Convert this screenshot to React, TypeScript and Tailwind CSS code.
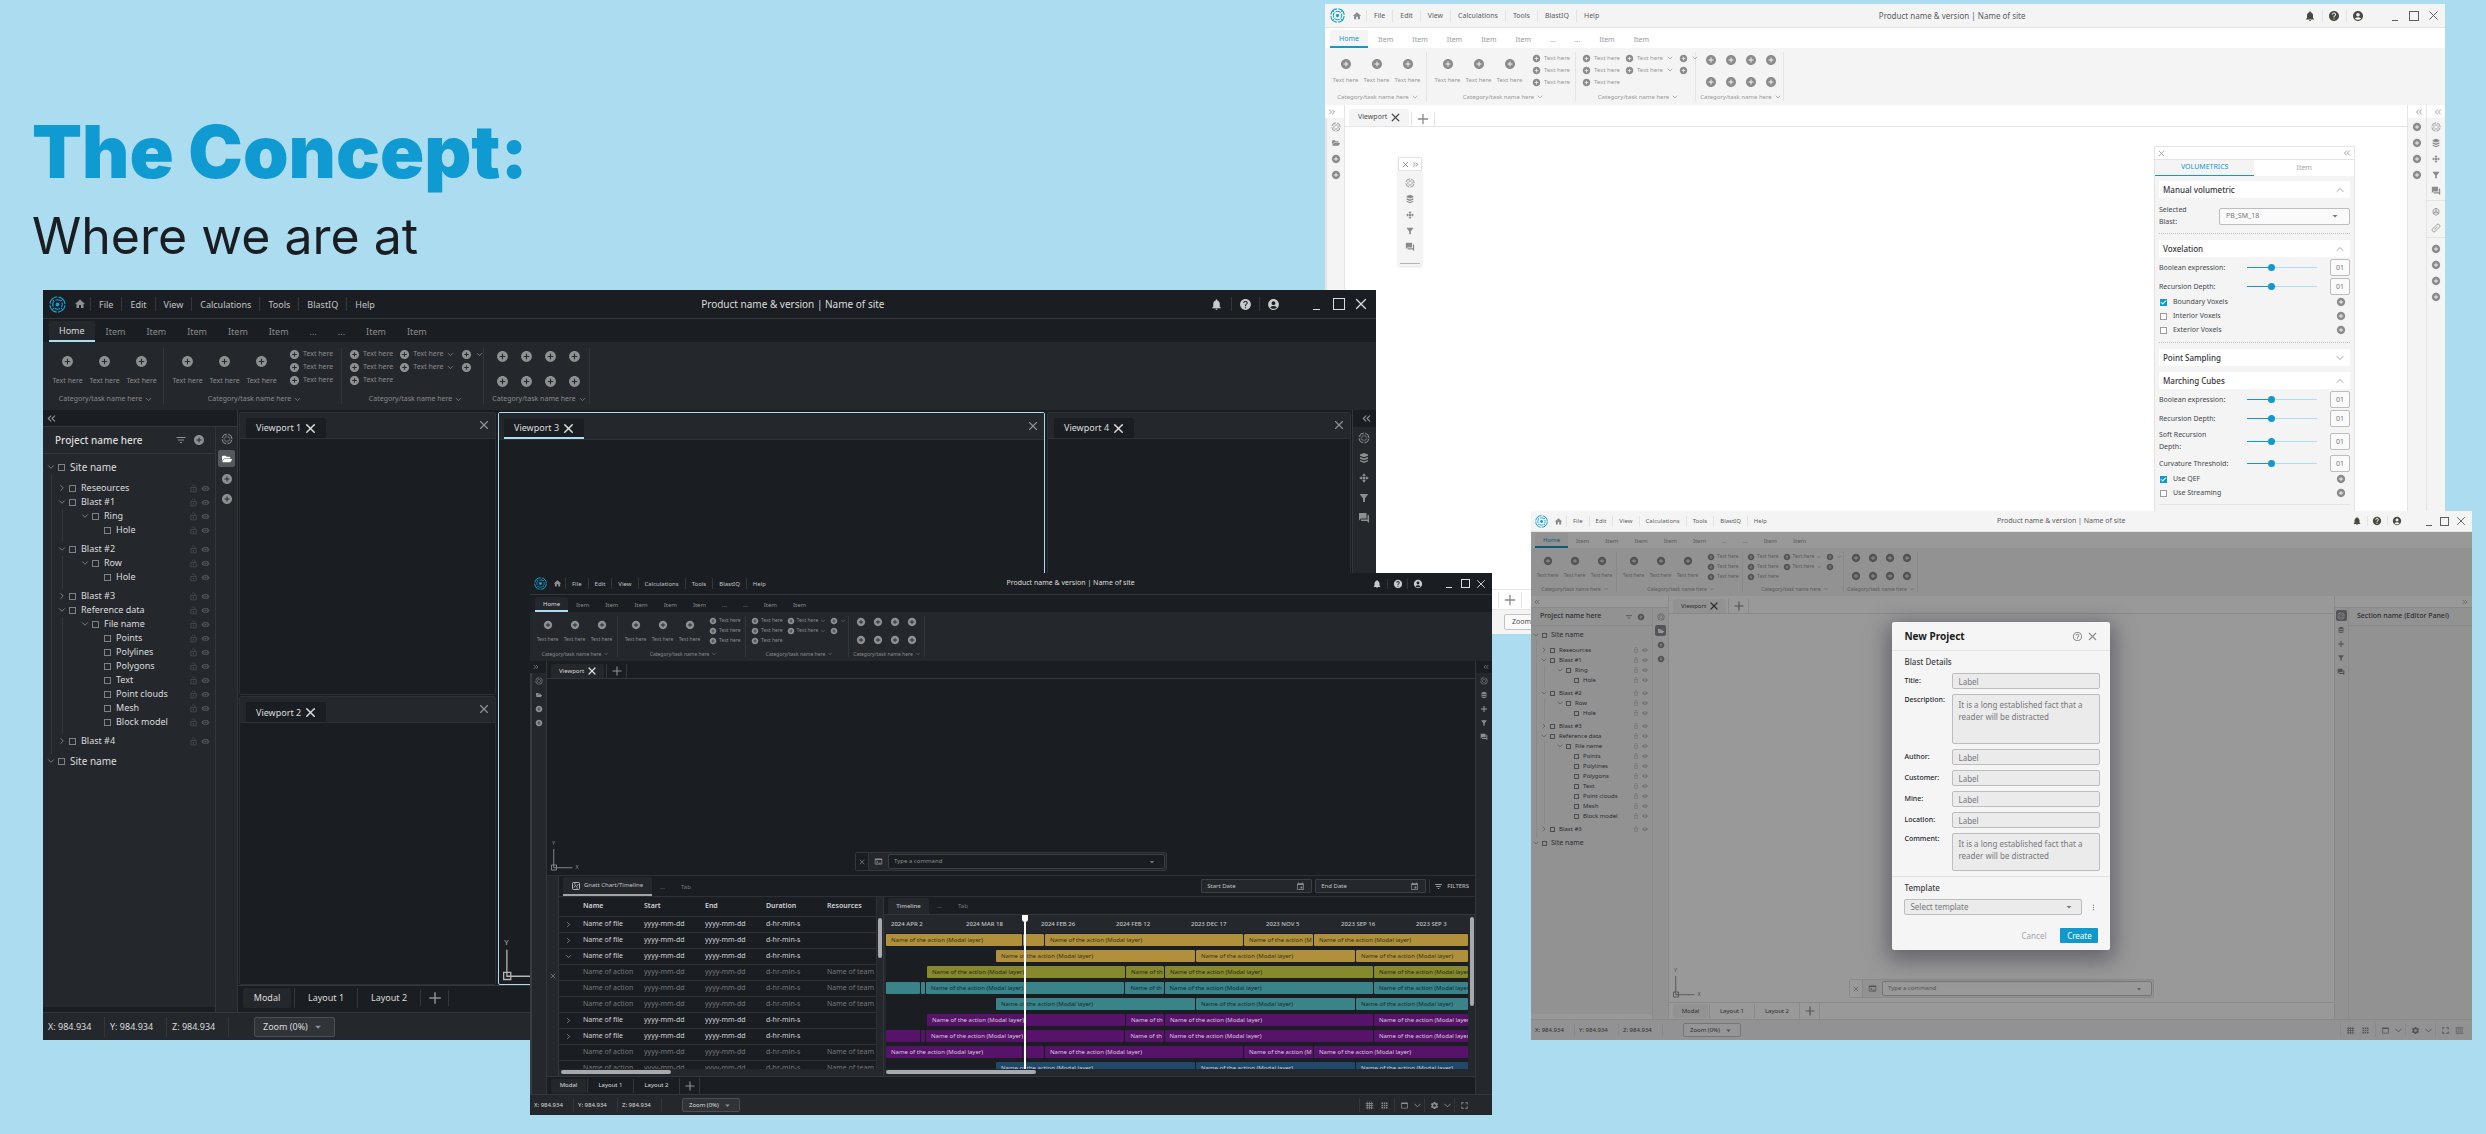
import type { ReactNode } from "react";
import clsx from "clsx";
import { Check, ChevronDown, ChevronRight, ChevronUp, ChevronsLeft, ChevronsRight, Plus, X } from "lucide-react";
import {
  MdAccountCircle,
  MdAddCircle,
  MdApps,
  MdArrowDropDown,
  MdEvent,
  MdFilterAlt,
  MdFilterList,
  MdFullscreen,
  MdGrid4X4,
  MdHelp,
  MdHelpOutline,
  MdHome,
  MdLockOpen,
  MdMoreVert,
  MdNotifications,
  MdQuestionAnswer,
  MdSettings,
  MdTerminal,
  MdVisibility,
  MdWebAsset,
} from "react-icons/md";
import { FaFolderOpen } from "react-icons/fa";

/* ---------- themes ---------- */

const dark = {
  title: "bg-[#1a1d21] text-[#dcdddd]",
  menu: "text-[#c3c4c6]",
  base: "bg-[#1a1d21]",
  panel: "bg-[#24272c]",
  line: "border-[#33363b]",
  text: "text-[#dcdddd]",
  muted: "text-[#8b8c8e]",
  icon: "text-[#8e8f91]",
  faint: "text-[#4d4f52]",
  bright: "text-[#c9cacc]",
  home: "bg-[#24272c] text-[#dcdddd] border-[#abdcf0]",
  tab: "bg-[#24272c]",
  field: "bg-[#303338] border-[#4b4e53]",
  command: "border-[#3c3f44]",
  selected: "bg-[#55585c] text-white",
  strip: "border-l-[#3a3c41]",
};

const light: typeof dark = {
  title: "bg-[#f4f4f4] text-[#5b5d60]",
  menu: "text-[#5b5d60]",
  base: "bg-white",
  panel: "bg-[#f4f4f4]",
  line: "border-[#e4e4e5]",
  text: "text-[#4b4d52]",
  muted: "text-[#97989a]",
  icon: "text-[#8a8b8d]",
  faint: "text-[#b4b5b7]",
  bright: "text-[#4a4a42]",
  home: "bg-[#f4f4f4] text-[#1199cf] border-[#1199cf]",
  tab: "bg-[#f4f4f4]",
  field: "bg-[#fafafa] border-[#c4c4c5]",
  command: "border-[#c4c4c5]",
  selected: "bg-[#8d8e93] text-white",
  strip: "border-l-[#e4e4e5]",
};

/* ---------- densities ---------- */

const lg = {
  title: "h-[29px]",
  titleText: "text-[10px]",
  logo: "size-[17px]",
  logoBox: "pl-[6px] gap-[8px] pr-[4px]",
  home: "size-[12px]",
  menuItem: "h-[14px] px-[8px] text-[9px]",
  cell: "w-[28px] h-[14px]",
  cellIcon: "size-[13px]",
  winGroup: "pl-[19px] pr-[4px]",
  win: "w-[22px] h-[12px]",
  winSquare: "size-[12px]",
  winLine: "w-[7px]",
  winX: "size-[18px]",
  tabs: "h-[23px] pl-[6px] gap-px",
  tab: "h-[21px] px-[10px] text-[9px]",
  ribbon: "h-[68px]",
  group: ["w-[121px] pl-[6px]", "w-[178px] pl-[5px]", "w-[142px] pl-[7px]", "w-[106px] pl-[12px]"],
  groupBox: "my-[6px]",
  big: "w-[37px] pt-[7px] gap-[8px] text-[7px] leading-[10px]",
  bigIcon: "size-[13px]",
  smallGap: "ml-[9px]",
  small: "h-[13px] gap-[3px] text-[7px]",
  smallIcon: "size-[11px]",
  smallCols: "gap-[6px]",
  grid: "pt-[2px] gap-x-[11px] gap-y-[12px]",
  caption: "text-[7px] leading-[10px]",
  chev: "size-[9px]",
  viewTabs: "h-[27px] pl-[7px]",
  viewTab: "h-[20px] pl-[10px] pr-[8px] gap-[2px] text-[9px]",
  viewX: "size-[15px]",
  addTab: "w-[29px]",
  plus: "size-[18px]",
  bottom: "h-[27px] pl-[5px] pb-[3px] text-[9px]",
  bottomActive: "w-[48px] h-[20px] mr-[3px]",
  bottomTab: "w-[63px] h-[20px]",
  status: "h-[28px] text-[9px]",
  coord: "w-[62px] h-[20px] pl-[5px]",
  zoomGap: "ml-[25px]",
  zoom: "w-[81px] h-[20px] pl-[8px] pr-[9px]",
  drop: "size-[14px]",
  foot: "size-[12px]",
  stripTop: "h-[17px] pl-[2px] pr-[3px]",
  stripTool: "size-[17px] mb-[3px]",
  stripIcon: "size-[12px]",
  double: "size-[13px]",
  sideHead: "h-[27px] pl-[12px] pr-[10px] gap-[6px] text-[10px]",
  tree: "pt-[6px]",
  treeRoot: "h-[14px] pl-[4px] gap-[3px] text-[10px]",
  treeRow: ["", "h-[14px] pl-[6px] pr-[5px] gap-[3px] text-[9px]", "h-[14px] pl-[18px] pr-[5px] gap-[3px] text-[9px]", "h-[14px] pl-[41px] pr-[5px] gap-[3px] text-[9px]"],
  treeList: ["ml-[8px] pt-[7px] pb-[6px]", "ml-[10px] pb-[5px]"],
  treeChev: "size-[10px] -mx-px",
  box: "size-[7px] mr-[2px]",
  treeIcon: "size-[9px]",
};

const md: typeof lg = {
  title: "h-[24px]",
  titleText: "text-[8px]",
  logo: "size-[15px]",
  logoBox: "pl-[5px] gap-[7px] pr-[4px]",
  home: "size-[10px]",
  menuItem: "h-[12px] px-[7px] text-[7px]",
  cell: "w-[24px] h-[12px]",
  cellIcon: "size-[12px]",
  winGroup: "pl-[16px] pr-[2px]",
  win: "w-[19px] h-[10px]",
  winSquare: "size-[10px]",
  winLine: "w-[6px]",
  winX: "size-[15px]",
  tabs: "h-[20px] pl-[5px] gap-px",
  tab: "h-[18px] px-[9px] text-[7px]",
  ribbon: "h-[57px]",
  group: ["w-[102px] pl-[5px]", "w-[149px] pl-[5px]", "w-[120px] pl-[6px]", "w-[88px] pl-[9px]"],
  groupBox: "my-[4px]",
  big: "w-[31px] pt-[6px] gap-[6px] text-[6px] leading-[8px]",
  bigIcon: "size-[12px]",
  smallGap: "ml-[7px]",
  small: "h-[12px] gap-[3px] text-[6px]",
  smallIcon: "size-[9px]",
  smallCols: "gap-[5px]",
  grid: "pt-[2px] gap-x-[8px] gap-y-[10px]",
  caption: "text-[6px] leading-[8px]",
  chev: "size-[8px]",
  viewTabs: "h-[22px] pl-[4px]",
  viewTab: "h-[17px] pl-[9px] pr-[7px] gap-[2px] text-[7px]",
  viewX: "size-[13px]",
  addTab: "w-[24px]",
  plus: "size-[16px]",
  bottom: "h-[20px] pl-[4px] text-[7px]",
  bottomActive: "w-[40px] h-[16px] mr-[3px]",
  bottomTab: "w-[53px] h-[16px]",
  status: "h-[25px] text-[7px]",
  coord: "w-[52px] h-[16px] pl-[4px]",
  zoomGap: "ml-[23px]",
  zoom: "w-[68px] h-[16px] pl-[7px] pr-[6px]",
  drop: "size-[12px]",
  foot: "size-[10px]",
  stripTop: "h-[13px] pl-[2px] pr-[2px]",
  stripTool: "size-[13px] mb-[3px]",
  stripIcon: "size-[10px]",
  double: "size-[10px]",
  sideHead: "h-[20px] pl-[9px] pr-[9px] gap-[5px] text-[8px]",
  tree: "pt-[4px]",
  treeRoot: "h-[12px] pl-[3px] gap-[3px] text-[8px]",
  treeRow: ["", "h-[12px] pl-[5px] gap-[3px] text-[7px]", "h-[12px] pl-[15px] gap-[3px] text-[7px]", "h-[12px] pl-[35px] gap-[3px] text-[7px]"],
  treeList: ["ml-[6px] pt-[6px] pb-[5px]", "ml-[8px] pb-[4px]"],
  treeChev: "size-[7px]",
  box: "size-[6px] mr-[1px]",
  treeIcon: "size-[8px]",
};

const sm: typeof lg = {
  title: "h-[22px]",
  titleText: "text-[7px]",
  logo: "size-[13px]",
  logoBox: "pl-[4px] gap-[6px] pr-[3px]",
  home: "size-[9px]",
  menuItem: "h-[11px] px-[6px] text-[6px]",
  cell: "w-[20px] h-[10px]",
  cellIcon: "size-[10px]",
  winGroup: "pl-[14px] pr-[3px]",
  win: "w-[16px] h-[9px]",
  winSquare: "size-[9px]",
  winLine: "w-[6px]",
  winX: "size-[14px]",
  tabs: "h-[17px] pl-[5px]",
  tab: "h-[15px] px-[8px] text-[6px]",
  ribbon: "h-[49px]",
  group: ["w-[88px] pl-[4px]", "w-[128px] pl-[4px]", "w-[103px] pl-[5px]", "w-[76px] pl-[7px]"],
  groupBox: "my-[4px]",
  big: "w-[27px] pt-[4px] gap-[6px] text-[5px] leading-[6px]",
  bigIcon: "size-[10px]",
  smallGap: "ml-[6px]",
  small: "h-[10px] gap-[2px] text-[5px]",
  smallIcon: "size-[8px]",
  smallCols: "gap-[4px]",
  grid: "pt-[1px] gap-x-[7px] gap-y-[8px]",
  caption: "text-[5px] leading-[6px]",
  chev: "size-[6px]",
  viewTabs: "h-[18px] pl-[4px]",
  viewTab: "h-[14px] pl-[8px] pr-[6px] gap-[2px] text-[6px]",
  viewX: "size-[12px]",
  addTab: "w-[21px]",
  plus: "size-[14px]",
  bottom: "h-[18px] pl-[4px] text-[6px]",
  bottomActive: "w-[35px] h-[14px] mr-[1px]",
  bottomTab: "w-[46px] h-[14px]",
  status: "h-[21px] text-[6px]",
  coord: "w-[44px] h-[14px] pl-[4px]",
  zoomGap: "ml-[20px]",
  zoom: "w-[58px] h-[14px] pl-[6px] pr-[6px]",
  drop: "size-[11px]",
  foot: "size-[9px]",
  stripTop: "h-[12px] pl-[2px] pr-[2px]",
  stripTool: "size-[11px] mb-[3px]",
  stripIcon: "size-[8px]",
  double: "size-[8px]",
  sideHead: "h-[18px] pl-[9px] pr-[7px] gap-[4px] text-[7px]",
  tree: "pt-[4px]",
  treeRoot: "h-[10px] pl-[2px] gap-[3px] text-[7px]",
  treeRow: ["", "h-[10px] pl-[4px] pr-[4px] gap-[3px] text-[6px]", "h-[10px] pl-[12px] pr-[4px] gap-[3px] text-[6px]", "h-[10px] pl-[29px] pr-[4px] gap-[3px] text-[6px]"],
  treeList: ["ml-[5px] pt-[5px] pb-[4px]", "ml-[7px] pb-[3px]"],
  treeChev: "size-[8px] -mx-px",
  box: "size-[5px] mr-[1px]",
  treeIcon: "size-[6px]",
};

const xs: typeof lg = {
  ...sm,
  title: "h-[21px]",
  tabs: "h-[16px] pl-[4px]",
  ribbon: "h-[48px]",
  group: ["w-[86px] pl-[3px]", "w-[126px] pl-[3px]", "w-[101px] pl-[4px]", "w-[74px] pl-[7px]"],
  bottom: "h-[17px] pl-[4px] text-[6px]",
  bottomTab: "w-[45px] h-[14px]",
};

type Look = { t: typeof dark; s: typeof lg };

/* ---------- drawn icons ---------- */

function Logo({ className }: { className: string }) {
  return (
    <svg viewBox="0 0 32 32" className={className} fill="none" stroke="#12a0d6">
      <circle cx="16" cy="16" r="14.2" strokeWidth="2.4" strokeDasharray="19.3 3" strokeDashoffset="-1.5" />
      <circle cx="16" cy="16" r="9" strokeWidth="2.2" strokeDasharray="10.6 3.54" strokeDashoffset="5.3" />
      <path d="M6 6l4 4M26 6l-4 4M6 26l4-4M26 26l-4-4" strokeWidth="1.8" />
      <circle cx="16" cy="16" r="3.6" fill="#12a0d6" stroke="none" />
    </svg>
  );
}

function TargetIcon({ className }: { className: string }) {
  return (
    <svg viewBox="0 0 24 24" className={className} fill="none" stroke="currentColor" strokeWidth="2">
      <circle cx="12" cy="12" r="10" strokeDasharray="12.700 3" strokeDashoffset="-1.5" />
      <path d="M10 5v3.500L8.500 10H5M14 5v3.500l1.500 1.500H19M10 19v-3.500L8.500 14H5M14 19v-3.500l1.500-1.500H19" strokeWidth="1.600" />
    </svg>
  );
}

function FolderIcon({ className }: { className: string }) {
  return <FaFolderOpen className={clsx("p-px", className)} />;
}

function StackIcon({ className }: { className: string }) {
  return (
    <svg viewBox="0 0 24 24" className={className} fill="currentColor">
      <path d="M12 2l8 3v2.500l-8 3-8-3V5zM4 10l8 3 8-3v3.500l-8 3-8-3zM4 16l8 3 8-3v2.500l-8 3.500-8-3.500z" />
    </svg>
  );
}

function DiamondIcon({ className }: { className: string }) {
  return (
    <svg viewBox="0 0 24 24" className={className} fill="currentColor">
      <path d="M12 2.500l3.500 4.500L12 8.500 8.500 7zM12 21.500L8.500 17l3.500-1.500 3.500 1.500zM2.500 12L7 8.500 8.500 12 7 15.500zM21.500 12L17 15.500 15.500 12 17 8.500z" />
      <circle cx="12" cy="12" r="3.200" />
    </svg>
  );
}

function CubeIcon({ className }: { className: string }) {
  return (
    <svg viewBox="0 0 24 24" className={className} fill="none" stroke="currentColor" strokeWidth="2">
      <path d="M12 3l7 4.500v8L12 20l-7-4.500v-8zM12 8l4 6H8zM12 3v5M5 15.500L8 14M19 15.500L16 14" />
    </svg>
  );
}

function RulerIcon({ className }: { className: string }) {
  return (
    <svg viewBox="0 0 24 24" className={className} fill="none" stroke="currentColor" strokeWidth="2">
      <path d="M3 15L15 3q3-1 5 1t1 5L9 21q-3 1-5-1t-1-5zM8 16l7-7" />
    </svg>
  );
}

function LinesIcon({ className }: { className: string }) {
  return (
    <svg viewBox="0 0 24 24" className={className} fill="none" stroke="currentColor" strokeWidth="2.500">
      <path d="M2 5h20M2 19h20" />
      <path d="M2 10h20M2 14h20" strokeDasharray="3 2" />
    </svg>
  );
}

function Axis({ className }: { className: string }) {
  return (
    <svg viewBox="0 0 34 36" className={className} fill="none" stroke="currentColor">
      <text x="1" y="8" fontSize="6" fill="currentColor" stroke="none">Y</text>
      <text x="27" y="34" fontSize="6" fill="currentColor" stroke="none">X</text>
      <path d="M3 12v20.500h20.500M.5 29.500h5.500v5.500h-5.500z" />
    </svg>
  );
}

/* ---------- window chrome ---------- */

const menus = ["File", "Edit", "View", "Calculations", "Tools", "BlastIQ", "Help"];
const ribbonTabs = ["Home", "Item", "Item", "Item", "Item", "Item", "...", "...", "Item", "Item"];

function TitleBar({ t, s }: Look) {
  return (
    <header className={clsx("flex items-center border-b", s.title, t.title, t.line)}>
      <div className="flex w-[49%] items-center">
        <div className={clsx("flex items-center", s.logoBox)}>
          <Logo className={s.logo} />
          <MdHome className={clsx(s.home, t.icon)} />
        </div>
        {menus.map((m) => (
          <button key={m} className={clsx("border-l leading-none", s.menuItem, t.line, t.menu)}>
            {m}
          </button>
        ))}
      </div>
      <h2 className={clsx("flex-1 pl-[5px] whitespace-nowrap", s.titleText)}>Product name &amp; version | Name of site</h2>
      <div className={clsx("flex items-center", t.bright)}>
        {[MdNotifications, MdHelp, MdAccountCircle].map((Icon, i) => (
          <button key={i} aria-label={["Notifications", "Help", "Account"][i]} className={clsx("flex items-center justify-center", s.cell, t.line, i > 0 && "border-l")}>
            <Icon className={s.cellIcon} />
          </button>
        ))}
      </div>
      <div className={clsx("flex items-center", s.winGroup)}>
        <button aria-label="Minimise" className={clsx("flex items-end justify-center", s.win)}>
          <span className={clsx("border-b border-current", s.winLine)} />
        </button>
        <button aria-label="Maximise" className={clsx("flex items-center justify-center", s.win)}>
          <span className={clsx("border border-current", s.winSquare)} />
        </button>
        <button aria-label="Close" className={clsx("flex items-center justify-center", s.win)}>
          <X className={clsx("shrink-0", s.winX)} strokeWidth={1.6} />
        </button>
      </div>
    </header>
  );
}

function BigButtons({ t, s }: Look) {
  return (
    <>
      {[0, 1, 2].map((i) => (
        <button key={i} className={clsx("flex flex-col items-center whitespace-nowrap", s.big, t.muted)}>
          <MdAddCircle className={clsx("shrink-0", s.bigIcon, t.icon)} />
          Text here
        </button>
      ))}
    </>
  );
}

function SmallButton({ t, s, text, chevron }: Look & { text?: boolean; chevron?: boolean }) {
  return (
    <button aria-label="Text here" className={clsx("flex items-center whitespace-nowrap", s.small, t.muted)}>
      <MdAddCircle className={clsx("shrink-0", s.smallIcon, t.icon)} />
      {text && "Text here"}
      {chevron && <ChevronDown className={clsx("shrink-0", s.chev)} />}
    </button>
  );
}

function RibbonGroup({ t, s, index, children }: Look & { index: number; children: ReactNode }) {
  return (
    <section className={clsx("flex flex-col justify-between border-r", s.groupBox, s.group[index], t.line)}>
      <div className="flex items-start">{children}</div>
      <button className={clsx("flex items-center gap-[2px] self-center whitespace-nowrap", index === 3 ? "-ml-[6px]" : "", s.caption, t.muted)}>
        Category/task name here
        <ChevronDown className={s.chev} />
      </button>
    </section>
  );
}

function Ribbon({ t, s }: Look) {
  return (
    <>
      <nav className={clsx("flex items-end", s.tabs, t.base)}>
        {ribbonTabs.map((name, i) => (
          <button key={i} className={clsx("leading-none", s.tab, i === 0 ? ["rounded-t-[2px] border-b-2", t.home] : t.muted)}>
            {name}
          </button>
        ))}
      </nav>
      <div className={clsx("flex", s.ribbon, t.panel)}>
        <RibbonGroup t={t} s={s} index={0}>
          <BigButtons t={t} s={s} />
        </RibbonGroup>
        <RibbonGroup t={t} s={s} index={1}>
          <BigButtons t={t} s={s} />
          <div className={s.smallGap}>
            {[0, 1, 2].map((i) => (
              <SmallButton key={i} t={t} s={s} text />
            ))}
          </div>
        </RibbonGroup>
        <RibbonGroup t={t} s={s} index={2}>
          <div className={clsx("flex items-start", s.smallCols)}>
            <div>
              {[0, 1, 2].map((i) => (
                <SmallButton key={i} t={t} s={s} text />
              ))}
            </div>
            <div>
              <SmallButton t={t} s={s} text chevron />
              <SmallButton t={t} s={s} text chevron />
            </div>
            <div>
              <SmallButton t={t} s={s} chevron />
              <SmallButton t={t} s={s} />
            </div>
          </div>
        </RibbonGroup>
        <RibbonGroup t={t} s={s} index={3}>
          <div className={clsx("grid grid-cols-4", s.grid)}>
            {[0, 1, 2, 3, 4, 5, 6, 7].map((i) => (
              <button key={i} aria-label="Add">
                <MdAddCircle className={clsx(s.bigIcon, t.icon)} />
              </button>
            ))}
          </div>
        </RibbonGroup>
      </div>
    </>
  );
}

function ToolIcons({ t, s, icons, active = -1 }: Look & { icons: any[]; active?: number }) {
  return (
    <>
      {icons.map((Icon, i) =>
        Icon === null ? (
          <hr key={i} className={clsx("mb-[4px] w-full border-t", t.line)} />
        ) : (
          <button key={i} aria-label="Tool" className={clsx("flex items-center justify-center rounded-[2px]", s.stripTool, i === active ? t.selected : t.icon)}>
            <Icon className={s.stripIcon} />
          </button>
        ),
      )}
    </>
  );
}

const leftTools = [TargetIcon, FolderIcon, MdAddCircle, MdAddCircle];
const rightTools = [TargetIcon, StackIcon, DiamondIcon, MdFilterAlt, MdQuestionAnswer];

/* Narrow docked tool column with a collapse bar on top */
function ToolStrip({ t, s, icons, side, className }: Look & { icons: any[]; side: "left" | "right"; className: string }) {
  return (
    <aside className={clsx("flex flex-col", side === "left" ? "border-r" : "border-l", className, t.line, t.panel)}>
      <button aria-label="Expand" className={clsx("flex items-center", side === "right" && "justify-end", s.stripTop, t.base, t.icon)}>
        {side === "left" ? <ChevronsRight className={s.double} /> : <ChevronsLeft className={s.double} />}
      </button>
      <div className={clsx("flex flex-1 flex-col items-center pt-[2px]", side === "left" && "border-l-2", t.strip)}>
        <ToolIcons t={t} s={s} icons={icons} />
      </div>
    </aside>
  );
}

function ViewTabs({ t, s }: Look) {
  return (
    <div className={clsx("flex items-end border-b", s.viewTabs, t.base, t.line)}>
      <button className={clsx("mr-[2px] flex items-center rounded-t-[2px]", s.viewTab, t.tab, t.text)}>
        Viewport
        <X className={s.viewX} strokeWidth={2.4} />
      </button>
      <button aria-label="Add viewport" className={clsx("flex h-[14px] items-center justify-center border-x", s.addTab, t.line, t.icon)}>
        <Plus className={s.plus} />
      </button>
    </div>
  );
}

function LayoutTabs({ t, s }: Look) {
  return (
    <div className={clsx("flex items-center border-t", s.bottom, t.base, t.line, t.text)}>
      <button className={clsx("rounded-[2px]", s.bottomActive, t.tab)}>Modal</button>
      <button className={clsx("border-l", s.bottomTab, t.line)}>Layout 1</button>
      <button className={clsx("border-l", s.bottomTab, t.line)}>Layout 2</button>
      <button aria-label="Add layout" className={clsx("flex h-[16px] items-center justify-center border-x", s.addTab, t.line, t.icon)}>
        <Plus className={s.plus} />
      </button>
    </div>
  );
}

function StatusBar({ t, s, extra, className }: Look & { extra?: boolean; className?: string }) {
  return (
    <footer className={clsx("flex items-center justify-between border-t", s.status, t.panel, t.line, t.text, className)}>
      <div className="flex items-center">
        {["X: 984.934", "Y: 984.934", "Z: 984.934"].map((c) => (
          <span key={c} className={clsx("flex items-center border-r whitespace-nowrap", s.coord, t.line)}>
            {c}
          </span>
        ))}
        <label className={clsx("flex items-center rounded-[2px] border", s.zoomGap, s.zoom, t.field)}>
          <select aria-label="Zoom" className="min-w-0 flex-1 appearance-none">
            <option>Zoom (0%)</option>
          </select>
          <MdArrowDropDown className={clsx("shrink-0", s.drop, t.icon)} />
        </label>
      </div>
      <div className={clsx("flex items-center", t.icon)}>
        <div className={clsx("flex h-[14px] items-center gap-[6px] border-l px-[5px]", t.line)}>
          <MdGrid4X4 className={s.foot} />
          <MdApps className={s.foot} />
        </div>
        <div className={clsx("flex h-[14px] items-center gap-[3px] border-l pr-px pl-[5px]", t.line)}>
          <MdWebAsset className={s.foot} />
          <ChevronDown className={s.drop} />
        </div>
        <div className={clsx("flex h-[14px] items-center gap-[3px] border-l pr-px pl-[5px]", t.line)}>
          <MdSettings className={s.foot} />
          <ChevronDown className={s.drop} />
        </div>
        <div className={clsx("flex h-[14px] items-center gap-[4px] border-l pl-[4px]", extra ? "pr-[8px]" : "pr-[5px]", t.line)}>
          <MdFullscreen className={s.drop} />
          {extra && <LinesIcon className={s.foot} />}
        </div>
      </div>
    </footer>
  );
}

/* ---------- project tree ---------- */

type Node = { name: string; open?: boolean; children?: Node[] };

const makeTree = (last: string): Node[] => [
  {
    name: "Site name",
    children: [
      { name: "Reseources", open: false },
      { name: "Blast #1", children: [{ name: "Ring", children: [{ name: "Hole" }] }] },
      { name: "Blast #2", children: [{ name: "Row", children: [{ name: "Hole" }] }] },
      { name: "Blast #3", open: false },
      {
        name: "Reference data",
        children: [
          {
            name: "File name",
            children: ["Points", "Polylines", "Polygons", "Text", "Point clouds", "Mesh", "Block model"].map((name) => ({ name })),
          },
        ],
      },
      { name: last, open: false },
    ],
  },
  { name: "Site name", open: true },
];

function TreeNode({ t, s, node, depth }: Look & { node: Node; depth: number }) {
  return (
    <li>
      <div className={clsx("flex items-center whitespace-nowrap", depth === 0 ? s.treeRoot : s.treeRow[depth])}>
        {depth < 3 &&
          (node.open === false ? (
            <ChevronRight className={clsx(s.treeChev, t.icon)} />
          ) : (
            <ChevronDown className={clsx(s.treeChev, t.icon)} />
          ))}
        <label className="flex flex-1 items-center gap-[3px]">
          <input type="checkbox" className={clsx("appearance-none border border-[#808184]", s.box)} />
          {node.name}
        </label>
        {depth > 0 && (
          <>
            <MdLockOpen className={clsx(s.treeIcon, t.faint)} />
            <MdVisibility className={clsx(s.treeIcon, t.faint)} />
          </>
        )}
      </div>
      {node.children && (
        <ul className={depth < 2 ? clsx("border-l", s.treeList[depth], t.line) : ""}>
          {node.children.map((child, i) => (
            <TreeNode key={i} t={t} s={s} node={child} depth={depth + 1} />
          ))}
        </ul>
      )}
    </li>
  );
}

function ProjectPanel({ t, s, last, tree, tools, active }: Look & { last: string; tree: string; tools: string; active: number }) {
  return (
    <aside className="flex flex-col">
      <button aria-label="Collapse" className={clsx("flex items-center border-r border-b", s.stripTop, t.base, t.line, t.icon)}>
        <ChevronsLeft className={s.double} />
      </button>
      <div className="flex flex-1">
        <div className={clsx("flex flex-col border-r", tree, t.line, t.base)}>
          <div className={clsx("flex flex-1 flex-col", t.panel, t.text)}>
            <div className={clsx("flex items-center border-b font-medium whitespace-nowrap", s.sideHead, t.line)}>
              <span className="flex-1">Project name here</span>
              <MdFilterList className={clsx(s.stripIcon, t.icon)} />
              <MdAddCircle className={clsx(s.stripIcon, t.icon)} />
            </div>
            <ul className={s.tree}>
              {makeTree(last).map((node, i) => (
                <TreeNode key={i} t={t} s={s} node={node} depth={0} />
              ))}
            </ul>
          </div>
          <div className="h-[5px]" />
        </div>
        <div className={clsx("flex flex-col items-center border-r pt-[3px]", tools, t.panel, t.line)}>
          <ToolIcons t={t} s={s} icons={leftTools} active={active} />
        </div>
      </div>
    </aside>
  );
}

/* ---------- window: four viewports ---------- */

function Viewport({ name, active, children }: { name: string; active?: boolean; children?: ReactNode }) {
  return (
    <section className={clsx("flex min-w-0 flex-1 flex-col rounded-[2px] border bg-[#1a1d21]", active ? "border-[#abdcf0]" : "border-[#2d3035]")}>
      <div className={clsx("flex items-end border-b border-[#2d3035] bg-[#24272c] pr-[4px]", active ? "h-[27px] pl-[5px]" : "h-[26px] pl-[6px]")}>
        <button
          className={clsx(
            "flex h-[20px] items-center gap-[2px] rounded-t-[2px] bg-[#1a1d21] pr-[8px] pl-[10px] text-[9px] whitespace-nowrap text-[#dcdddd]",
            active && "border-b-2 border-[#abdcf0]",
          )}
        >
          {name}
          <X className="size-[15px]" strokeWidth={2.4} />
        </button>
        <button aria-label="Close viewport" className="mb-[6px] ml-auto text-[#8e8f91]">
          <X className="size-[14px]" />
        </button>
      </div>
      <div className="flex flex-1 items-end">{children}</div>
    </section>
  );
}

function MultiViewWindow() {
  const look = { t: dark, s: lg };
  return (
    <article className="absolute top-[290px] left-[1.73%] flex h-[750px] w-[53.62%] flex-col bg-[#1a1d21]">
      <TitleBar {...look} />
      <Ribbon {...look} />
      <div className="flex flex-1">
        <ProjectPanel {...look} last="Blast #4" tree="w-[173px]" tools="w-[22px]" active={1} />
        <div className="flex flex-1 flex-col">
          <div className="grid flex-1 grid-cols-[257fr_547fr_304fr] gap-[2px] px-px pt-[2px]">
            <div className="grid grid-rows-[283fr_288fr] gap-px">
              <Viewport name="Viewport 1" />
              <Viewport name="Viewport 2" />
            </div>
            <Viewport name="Viewport 3" active>
              <Axis className="mb-[3px] ml-[4px] h-[47px] w-[44px] text-[#b5b6b8]" />
            </Viewport>
            <Viewport name="Viewport 4" />
          </div>
          <LayoutTabs {...look} />
        </div>
        <ToolStrip {...look} side="right" icons={rightTools} className="w-[24px]" />
      </div>
      <StatusBar {...look} />
    </article>
  );
}

/* ---------- window: volumetrics ---------- */

function Accordion({ title, open = true, className }: { title: string; open?: boolean; className?: string }) {
  const Chevron = open ? ChevronUp : ChevronDown;
  return (
    <button className={clsx("flex h-[17px] w-full items-center justify-between bg-white px-[4px] text-[8px] font-medium text-[#33363b]", className)}>
      {title}
      <Chevron className="size-[12px] text-[#8a8b8d]" strokeWidth={1.6} />
    </button>
  );
}

function SliderRow({ label, id }: { label: ReactNode; id: string }) {
  return (
    <div className="mt-[2px] flex items-center">
      <label htmlFor={id} className="flex-1 leading-[12px]">
        {label}
      </label>
      <input
        id={id}
        type="range"
        defaultValue={34}
        className="mr-[13px] h-[7px] w-[70px] appearance-none bg-[linear-gradient(to_right,#1199cf_36%,#a9def3_36%)] bg-[length:100%_1px] bg-center bg-no-repeat [&::-webkit-slider-thumb]:size-[7px] [&::-webkit-slider-thumb]:appearance-none [&::-webkit-slider-thumb]:rounded-full [&::-webkit-slider-thumb]:bg-[#1199cf]"
      />
      <input aria-label="Value" defaultValue="01" className="h-[17px] w-[20px] rounded-[2px] border border-[#bdbdbe] bg-[#fafafa] text-center text-[#77787a]" />
    </div>
  );
}

function CheckRow({ label, checked }: { label: string; checked?: boolean }) {
  return (
    <div className="flex h-[14px] items-center justify-between pr-[4px] pl-px">
      <label className="flex items-center gap-[6px]">
        <span className="grid size-[7px]">
          <input type="checkbox" defaultChecked={checked} className="peer col-start-1 row-start-1 appearance-none border border-[#9a9b9d] bg-white checked:border-[#1199cf] checked:bg-[#1199cf]" />
          <Check className="invisible col-start-1 row-start-1 size-[7px] text-white peer-checked:visible" strokeWidth={3.5} />
        </span>
        {label}
      </label>
      <MdAddCircle className="size-[10px] text-[#8a8b8d]" />
    </div>
  );
}

function VolumetricsPanel() {
  return (
    <section className="absolute top-[19px] right-[52px] w-[201px] border border-[#e4e4e5] bg-[#f4f4f4] text-[7px] text-[#45484c]">
      <div className="flex h-[13px] items-center justify-between border-b border-[#e4e4e5] bg-white px-[2px] text-[#8a8b8d]">
        <X className="size-[9px]" />
        <ChevronsLeft className="size-[10px]" />
      </div>
      <div className="flex h-[16px]">
        <button className="flex-1 border-b border-[#1199cf] text-[#1199cf]">VOLUMETRICS</button>
        <button className="flex-1 bg-white text-[#a3a4a6]">Item</button>
      </div>
      <div className="px-[4px] pt-[5px]">
        <Accordion title="Manual volumetric" />
        <div className="mt-[6px] flex items-center justify-between">
          <label htmlFor="blast" className="w-[36px] leading-[12px]">
            Selected Blast:
          </label>
          <div className="flex h-[17px] w-[131px] items-center rounded-[2px] border border-[#bdbdbe] bg-[#fafafa] pr-[8px] pl-[6px] text-[#77787a]">
            <select id="blast" className="flex-1 appearance-none">
              <option>PB_SM_18</option>
            </select>
            <MdArrowDropDown className="size-[12px]" />
          </div>
        </div>
        <hr className="mt-[5px] border-t border-dotted border-[#bdbdbe]" />
        <Accordion title="Voxelation" className="mt-[6px]" />
        <SliderRow id="vox-expression" label="Boolean expression:" />
        <SliderRow id="vox-depth" label="Recursion Depth:" />
        <CheckRow label="Boundary Voxels" checked />
        <CheckRow label="Interior Voxels" />
        <CheckRow label="Exterior Voxels" />
        <hr className="mt-[5px] border-t border-dotted border-[#bdbdbe]" />
        <Accordion title="Point Sampling" open={false} className="mt-[6px]" />
        <Accordion title="Marching Cubes" className="mt-[6px]" />
        <SliderRow id="cube-expression" label="Boolean expression:" />
        <SliderRow id="cube-depth" label="Recursion Depth:" />
        <SliderRow
          id="cube-soft"
          label={
            <>
              Soft Recursion
              <br />
              Depth:
            </>
          }
        />
        <SliderRow id="cube-curve" label="Curvature Threshold:" />
        <CheckRow label="Use QEF" checked />
        <CheckRow label="Use Streaming" />
        <hr className="mt-[4px] mb-[20px] border-t border-[#e4e4e5]" />
      </div>
    </section>
  );
}

function VolumetricsWindow() {
  const look = { t: light, s: md };
  return (
    <article className="absolute top-[4px] left-[53.3%] flex h-[630px] w-[45.05%] flex-col bg-white">
      <TitleBar {...look} />
      <Ribbon {...look} />
      <div className="flex flex-1">
        <ToolStrip {...look} side="left" icons={leftTools} className="w-[20px]" />
        <div className="flex flex-1 flex-col">
          <ViewTabs {...look} />
          <div className="relative flex-1">
            <div className="absolute top-[30px] left-[53px] w-[24px] rounded-[2px] bg-[#f4f4f4] shadow">
              <div className="flex h-[14px] items-center justify-center gap-px border border-[#e4e4e5] bg-white text-[#77787a]">
                <X className="size-[9px]" />
                <ChevronsRight className="size-[9px]" />
              </div>
              <div className="flex flex-col items-center pt-[5px]">
                <ToolIcons {...look} icons={rightTools} />
                <span className="mt-[7px] mb-[2px] w-[20px] border-b border-[#b4b5b7]" />
              </div>
            </div>
            <VolumetricsPanel />
          </div>
          <LayoutTabs {...look} />
        </div>
        <ToolStrip {...look} side="right" icons={[MdAddCircle, MdAddCircle, MdAddCircle, MdAddCircle]} className="w-[19px]" />
        <ToolStrip
          {...look}
          side="right"
          icons={[...rightTools, null, CubeIcon, RulerIcon, null, MdAddCircle, MdAddCircle, MdAddCircle, MdAddCircle]}
          className="w-[19px]"
        />
      </div>
      <StatusBar {...look} />
    </article>
  );
}

/* ---------- command line ---------- */

function CommandArea({ t, columns }: { t: typeof dark; columns: string }) {
  return (
    <div className={clsx("grid flex-1 items-end", columns, t.base)}>
      <Axis className={clsx("mb-[4px] ml-[4px] h-[33px] w-[31px]", t.icon)} />
      <div className={clsx("mb-[4px] flex h-[19px] items-center rounded-[2px] border text-[6px]", t.panel, t.line, t.icon)}>
        <button aria-label="Close command line" className={clsx("flex h-full w-[13px] items-center justify-center border-r", t.base, t.line)}>
          <X className="size-[8px]" />
        </button>
        <MdTerminal className="mx-[5px] size-[9px]" />
        <label className={clsx("mr-px flex h-[15px] flex-1 items-center rounded-[2px] border pr-[7px] pl-[5px]", t.base, t.command)}>
          <input aria-label="Command" placeholder="Type a command" className="min-w-0 flex-1 placeholder:text-[#8b8c8e]" />
          <MdArrowDropDown className="size-[10px]" />
        </label>
      </div>
      <span />
    </div>
  );
}

/* ---------- window: gantt ---------- */

const rowKinds = ["file", "file", "open", "action", "action", "action", "file", "file", "action", "action"];
const dates = ["2024 APR 2", "2024 MAR 18", "2024 FEB 26", "2024 FEB 12", "2023 DEC 17", "2023 NOV 5", "2023 SEP 16", "2023 SEP 3"];

type Bar = [length: number, label: string];
const action = "Name of the action (Modal layer)";

const full = { lead: 0, bars: [[136, action], [21, ""], [198, action], [69, "Name of the action (M"], [154, action]] as Bar[] };
const late = { lead: 109, bars: [[199, action], [159, action], [112, action]] as Bar[] };
const mid = { lead: 40, bars: [[198, action], [38, "Name of th"], [208, action], [94, action]] as Bar[] };
const split = { lead: 0, bars: [[34, ""], [4, ""], ...mid.bars] as Bar[] };

const lanes = [
  { ...full, tone: "bg-[#b0903a] text-[#33321f]" },
  { ...late, tone: "bg-[#b0903a] text-[#33321f]" },
  { ...mid, tone: "bg-[#868a2d] text-[#26291f]" },
  { ...split, tone: "bg-[#3a8389] text-[#122a3a]" },
  { ...late, tone: "bg-[#3a8389] text-[#122a3a]" },
  { ...mid, tone: "bg-[#561369] text-[#d5cbd9]" },
  { ...split, tone: "bg-[#561369] text-[#d5cbd9]" },
  { ...full, tone: "bg-[#561369] text-[#d5cbd9]" },
  { ...late, tone: "bg-[#1f4869] text-[#c5d2dc]" },
];

function TaskTable() {
  return (
    <table className="w-full table-fixed text-left text-[7px] text-[#d2d3d5]">
      <colgroup>
        <col className="w-[24px]" />
        <col className="w-[61px]" />
        <col className="w-[61px]" />
        <col className="w-[61px]" />
        <col className="w-[61px]" />
        <col />
      </colgroup>
      <thead>
        <tr className="h-[19px] border-b border-[#2d3035]">
          <th />
          {["Name", "Start", "End", "Duration", "Resources"].map((h) => (
            <th key={h} className="py-0 font-semibold">
              {h}
            </th>
          ))}
        </tr>
      </thead>
      <tbody>
        {rowKinds.map((kind, i) => {
          const isAction = kind === "action";
          return (
            <tr key={i} className={clsx("h-[16px] border-b border-[#2d3035] leading-[10px] whitespace-nowrap", isAction && "text-[#77787b]")}>
              <td className="pl-[5px]">
                {kind === "file" && <ChevronRight className="size-[9px] text-[#8e8f91]" />}
                {kind === "open" && <ChevronDown className="size-[9px] text-[#8e8f91]" />}
              </td>
              <td>{isAction ? "Name of action" : "Name of file"}</td>
              <td>yyyy-mm-dd</td>
              <td>yyyy-mm-dd</td>
              <td>d-hr-min-s</td>
              <td>{isAction && "Name of team"}</td>
            </tr>
          );
        })}
      </tbody>
    </table>
  );
}

function Timeline() {
  return (
    <div className="relative flex-1 overflow-hidden bg-[#1a1d21]">
      <div className="flex h-[18px] items-center bg-[#24272c] pl-[5px] text-[6px] font-medium whitespace-nowrap text-[#c3c4c6]">
        {dates.map((d, i) => (
          <span key={d} className={i < 7 ? "flex-[75] basis-0" : "flex-[52] basis-0"}>
            {d}
          </span>
        ))}
      </div>
      <div className="flex flex-col gap-[4px] pt-px text-[6px] leading-[12px]">
        {lanes.map((lane, i) => (
          <div key={i} className="flex h-[12px] gap-px">
            {lane.lead > 0 && <span className="basis-0" style={{ flexGrow: lane.lead }} />}
            {lane.bars.map(([length, label], j) => (
              <div key={j} className={clsx("min-w-0 basis-0 overflow-hidden rounded-[1px] whitespace-nowrap", lane.tone)} style={{ flexGrow: length }}>
                {label && <span className="pl-[5px]">{label}</span>}
              </div>
            ))}
          </div>
        ))}
      </div>
      <div className="absolute inset-y-0 left-[23.4%] flex w-[6px] flex-col items-center">
        <span className="h-[7px] w-[6px] shrink-0 rounded-b-[3px] bg-white" />
        <span className="w-[2px] flex-1 bg-white" />
      </div>
    </div>
  );
}

function DateField({ label }: { label: string }) {
  return (
    <label className="flex h-[14px] w-[111px] items-center rounded-[1px] border border-[#3c3f44] bg-[#24272c] pr-[6px] pl-[5px]">
      <input aria-label={label} placeholder={label} className="min-w-0 flex-1 placeholder:text-[#c3c4c6]" />
      <MdEvent className="size-[9px] text-[#8e8f91]" />
    </label>
  );
}

function GanttPanel() {
  return (
    <section className="flex h-[201px] border-t border-[#2d3035] text-[6px] text-[#c3c4c6]">
      <button aria-label="Close panel" className="flex w-[12px] items-center justify-center border-r border-[#33363b] bg-[#24272c] text-[#8e8f91]">
        <X className="size-[8px]" />
      </button>
      <div className="flex min-w-0 flex-1 flex-col">
        <div className="flex h-[21px] items-end border-b border-[#2d3035] pl-[4px]">
          <button className="flex h-[19px] w-[89px] items-center justify-center gap-[4px] rounded-t-[2px] border-b-2 border-[#a3a4a6] bg-[#24272c] whitespace-nowrap">
            <svg viewBox="0 0 16 16" className="size-[8px]" fill="none" stroke="currentColor" strokeWidth="1.800">
              <rect x="1" y="1" width="14" height="14" rx="2" />
              <path d="M4 11l3-4 2 2 4-5M4 4h3M9 12h3" />
            </svg>
            Gnatt Chart/Timeline
          </button>
          <button className="h-[17px] w-[29px] pl-[8px] text-left text-[#77787b]">...</button>
          <button className="h-[17px] text-[#77787b]">Tab</button>
          <div className="ml-auto flex items-center gap-[3px] self-center">
            <DateField label="Start Date" />
            <DateField label="End Date" />
            <button className="flex h-[14px] items-center gap-[4px] border-l border-[#33363b] pr-[6px] pl-[4px]">
              <MdFilterList className="size-[9px]" />
              FILTERS
            </button>
          </div>
        </div>
        <div className="flex min-h-0 flex-1 bg-[#24272c]">
          <div className="flex w-[324px] flex-col">
            <div className="flex min-h-0 flex-1">
              <div className="flex-1 overflow-hidden bg-[#1a1d21]">
                <TaskTable />
              </div>
              <div className="w-[7px] border-l border-[#2d3035] bg-[#24272c] pt-[21px] pl-px">
                <div className="h-[40px] w-[4px] rounded-full bg-[#a8a9ad]" />
              </div>
            </div>
            <div className="h-[7px] pt-[1px] pl-[2px]">
              <div className="h-[4px] w-[110px] rounded-full bg-[#a8a9ad]" />
            </div>
          </div>
          <div className="flex min-w-0 flex-1 flex-col border-l border-[#33363b]">
            <div className="flex h-[18px] items-end border-b border-[#33363b] bg-[#1a1d21] pl-[4px] text-[#77787b]">
              <button className="h-[16px] w-[41px] rounded-t-[2px] bg-[#24272c] font-medium text-[#c3c4c6]">Timeline</button>
              <button className="h-[16px] w-[29px] pl-[8px] text-left">...</button>
              <button className="h-[16px]">Tab</button>
            </div>
            <div className="flex min-h-0 flex-1 pl-[2px]">
              <Timeline />
              <div className="w-[7px] pt-[2px] pl-[2px]">
                <div className="h-[89px] w-[4px] rounded-full bg-[#a8a9ad]" />
              </div>
            </div>
            <div className="h-[7px] pt-[1px] pl-[2px]">
              <div className="h-[4px] w-[150px] rounded-full bg-[#a8a9ad]" />
            </div>
          </div>
        </div>
      </div>
    </section>
  );
}

function GanttWindow() {
  const look = { t: dark, s: sm };
  return (
    <article className="absolute top-[573px] left-[21.32%] flex h-[542px] w-[38.7%] flex-col bg-[#1a1d21]">
      <TitleBar {...look} />
      <Ribbon {...look} />
      <div className="flex flex-1">
        <ToolStrip {...look} side="left" icons={leftTools} className="w-[17px]" />
        <div className="flex min-w-0 flex-1 flex-col">
          <ViewTabs {...look} />
          <CommandArea t={dark} columns="grid-cols-[1fr_312px_1fr]" />
          <GanttPanel />
          <LayoutTabs {...look} />
        </div>
        <ToolStrip {...look} side="right" icons={rightTools} className="w-[17px]" />
      </div>
      <StatusBar {...look} className="pr-[17px]" />
    </article>
  );
}

/* ---------- window: new project dialog ---------- */

function Field({ label, area }: { label: string; area?: string }) {
  const id = "project-" + label.toLowerCase();
  return (
    <div className="mb-[5px] flex items-start">
      <label htmlFor={id} className={clsx("w-[48px] text-[7px] leading-[10px] font-medium text-[#24272c]", area ? "pt-px" : "pt-[3px]")}>
        {label}:
      </label>
      {area ? (
        <textarea
          id={id}
          defaultValue="It is a long established fact that a reader will be distracted"
          className={clsx("block flex-1 resize-none overflow-hidden rounded-[2px] border border-[#bdbdbe] bg-[#ebebeb] px-[5px] pt-[4px] text-[8px] leading-[12px] text-[#77787b]", area)}
        />
      ) : (
        <input id={id} placeholder="Label" className="h-[16px] min-w-0 flex-1 rounded-[2px] border border-[#bdbdbe] bg-[#ebebeb] px-[5px] text-[8px] placeholder:text-[#77787b]" />
      )}
    </div>
  );
}

function NewProjectDialog() {
  return (
    <form className="w-[218px] rounded-[2px] bg-[#f5f5f5] text-[8px] text-[#3c3f44] shadow-[0_6px_22px_4px_rgba(60,60,75,0.6)]">
      <div className="flex h-[29px] items-center gap-[3px] border-b border-[#e4e4e5] pr-[11px] pl-[12px] text-[#8a8b8d]">
        <h3 className="flex-1 text-[10px] font-bold text-[#1a1d21]">New Project</h3>
        <MdHelpOutline className="size-[11px]" />
        <X className="size-[13px]" />
      </div>
      <div className="pt-[6px] pr-[10px] pl-[12px]">
        <p className="mb-[6px] leading-[10px] font-medium">Blast Details</p>
        <Field label="Title" />
        <Field label="Description" area="h-[50px]" />
        <Field label="Author" />
        <Field label="Customer" />
        <Field label="Mine" />
        <Field label="Location" />
        <Field label="Comment" area="h-[38px]" />
      </div>
      <div className="border-t border-[#e4e4e5] px-[12px] pt-[6px]">
        <label htmlFor="template" className="block leading-[10px] font-medium">
          Template
        </label>
        <div className="mt-[6px] flex items-center justify-between">
          <div className="flex h-[16px] w-[178px] items-center rounded-[2px] border border-[#bdbdbe] bg-[#ebebeb] pr-[6px] pl-[5px] text-[#77787b]">
            <select id="template" className="flex-1 appearance-none">
              <option>Select template</option>
            </select>
            <MdArrowDropDown className="size-[12px]" />
          </div>
          <MdMoreVert className="size-[9px] text-[#8a8b8d]" />
        </div>
        <div className="flex items-center justify-end gap-[14px] pt-[13px] pb-[7px]">
          <button type="button" className="text-[#a3a4a6]">
            Cancel
          </button>
          <button type="submit" className="h-[15px] w-[38px] rounded-[1px] bg-[#1199cf] text-white">
            Create
          </button>
        </div>
      </div>
    </form>
  );
}

function ProjectWindow() {
  const look = { t: light, s: xs };
  return (
    <article className="absolute top-[511px] left-[61.585%] flex h-[529px] w-[37.85%] flex-col bg-white">
      <TitleBar {...look} />
      <div className="relative flex flex-1 flex-col">
        <Ribbon {...look} />
        <div className="flex flex-1">
          <ProjectPanel {...look} last="Blast #3" tree="w-[122px]" tools="w-[16px]" active={1} />
          <div className="flex min-w-0 flex-1 flex-col">
            <ViewTabs {...look} />
            <CommandArea t={light} columns="grid-cols-[1fr_305px_1fr]" />
            <LayoutTabs {...look} />
          </div>
          <aside className="flex flex-col">
            <button aria-label="Collapse" className="flex h-[12px] items-center justify-end border-b border-l border-[#e4e4e5] bg-white pr-[3px] text-[#8a8b8d]">
              <ChevronsRight className="size-[8px]" />
            </button>
            <div className="flex flex-1 bg-[#f4f4f4]">
              <div className="flex w-[15px] flex-col items-center border-x border-[#e4e4e5] pt-[2px]">
                <ToolIcons {...look} icons={rightTools} active={0} />
              </div>
              <div className="w-[123px]">
                <p className="flex h-[18px] items-center border-b border-[#e4e4e5] pl-[8px] text-[7px] font-medium whitespace-nowrap text-[#4b4d52]">
                  Section name (Editor Panel)
                </p>
              </div>
            </div>
          </aside>
        </div>
        <StatusBar {...look} extra />
        <div className="absolute inset-0 flex items-center justify-center bg-black/40">
          <NewProjectDialog />
        </div>
      </div>
    </article>
  );
}

export default function App() {
  return (
    <main className="relative min-h-screen overflow-hidden bg-[#abdcf0] font-['Noto_Sans',sans-serif]">
      <div className="pt-[108px] pl-[32px] font-['Inter',sans-serif]">
        <h1 className="text-[73px] leading-[88px] font-black text-[#0f9bd1]">The Concept:</h1>
        <p className="mt-[10px] text-[50px] leading-[60px] text-[#1a1d21]">Where we are at</p>
      </div>
      <VolumetricsWindow />
      <MultiViewWindow />
      <GanttWindow />
      <ProjectWindow />
    </main>
  );
}
